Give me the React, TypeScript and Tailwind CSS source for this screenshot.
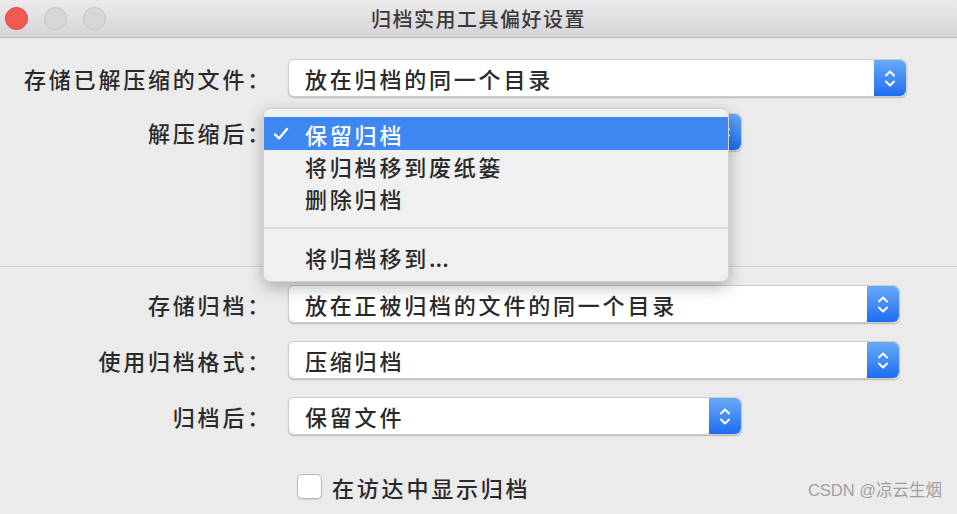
import React from "react";

const FONT = { fontFamily: '"Noto Sans CJK SC", "Noto Sans", sans-serif' };

function Stepper() {
  return (
    <div className="w-[32px] self-stretch rounded-r-[6px] bg-gradient-to-b from-[#68a9f8] to-[#1b6cf0] flex flex-col items-center justify-center gap-[3px]">
      <svg width="12" height="8" viewBox="0 0 12 8" fill="none">
        <path d="M2 6.5 L6 2.5 L10 6.5" stroke="white" strokeWidth="2" strokeLinecap="round" strokeLinejoin="round" />
      </svg>
      <svg width="12" height="8" viewBox="0 0 12 8" fill="none">
        <path d="M2 1.5 L6 5.5 L10 1.5" stroke="white" strokeWidth="2" strokeLinecap="round" strokeLinejoin="round" />
      </svg>
    </div>
  );
}

function Select({ text, width }: { text?: string; width: string }) {
  return (
    <div
      className={`${width} h-[38px] flex items-stretch rounded-[6px] bg-white border border-[#cdcdcd] shadow-[0_1px_1.5px_rgba(0,0,0,0.22)]`}
    >
      <div className="flex-1 flex items-center pl-[16px] text-[22px] tracking-[2.8px] font-medium text-[#2a2a2a] leading-none">
        {text}
      </div>
      <Stepper />
    </div>
  );
}

function Row({ label, children, className }: { label: string; children: React.ReactNode; className?: string }) {
  return (
    <div className={`flex items-center ${className ?? ""}`}>
      <div className="w-[272px] text-right text-[22px] tracking-[2.8px] font-medium text-[#2a2a2a] leading-none">{label}</div>
      <div className="ml-[16px]">{children}</div>
    </div>
  );
}

export default function App() {
  return (
    <div className="relative w-[957px] h-[514px] overflow-hidden bg-[#ebebeb]" style={FONT}>
      {/* Title bar */}
      <div className="h-[38px] grid grid-cols-[1fr_auto_1fr] items-center bg-gradient-to-b from-[#eceaec] to-[#d6d4d6] border-b border-[#b9b9b9]">
        <div className="flex items-center gap-[16px] pl-[5px]">
          <div className="w-[23px] h-[23px] rounded-full bg-[#ef5a51] border border-[#d9463e]" />
          <div className="w-[23px] h-[23px] rounded-full bg-[#d8d7d8] border border-[#c6c5c6]" />
          <div className="w-[23px] h-[23px] rounded-full bg-[#d8d7d8] border border-[#c6c5c6]" />
        </div>
        <div className="text-[20px] tracking-[1.5px] font-medium text-[#3a3a3a] leading-none">归档实用工具偏好设置</div>
        <div />
      </div>

      {/* Top section */}
      <div className="pt-[21px]">
        <Row label="存储已解压缩的文件：">
          <Select text="放在归档的同一个目录" width="w-[619px]" />
        </Row>
        <Row label="解压缩后：" className="mt-[16px]">
          <Select width="w-[454px]" />
        </Row>
      </div>

      {/* Separator */}
      <div className="mt-[115px] h-px bg-[#d2d2d2]" />

      {/* Bottom section */}
      <div className="pt-[18px]">
        <Row label="存储归档：">
          <Select text="放在正被归档的文件的同一个目录" width="w-[612px]" />
        </Row>
        <Row label="使用归档格式：" className="mt-[18px]">
          <Select text="压缩归档" width="w-[612px]" />
        </Row>
        <Row label="归档后：" className="mt-[18px]">
          <Select text="保留文件" width="w-[454px]" />
        </Row>
        <div className="mt-[39px] ml-[297px] flex items-center">
          <div className="w-[25px] h-[25px] rounded-[5px] bg-white border border-[#b9b9b9] shadow-[0_1px_1px_rgba(0,0,0,0.1)]" />
          <div className="ml-[10px] text-[22px] tracking-[2.8px] font-medium text-[#2a2a2a] leading-none">在访达中显示归档</div>
        </div>
      </div>

      {/* Popup menu */}
      <div className="absolute left-[263px] top-[108px] w-[466px] rounded-[7px] bg-[#f0f0f0] border border-[#d3d3d3] shadow-[0_5px_16px_rgba(0,0,0,0.28)] pt-[8px] pb-[8px] text-[22px] tracking-[2.8px] font-medium leading-none text-[#2a2a2a]">
        <div className="h-[33px] flex items-center bg-[#3d88f2] text-white">
          <svg className="ml-[9px]" width="16" height="14" viewBox="0 0 16 14" fill="none">
            <path d="M2 7.5 L6 11.5 L14 2" stroke="white" strokeWidth="2.4" strokeLinecap="round" strokeLinejoin="round" />
          </svg>
          <span className="ml-[16px]">保留归档</span>
        </div>
        <div className="h-[32px] flex items-center pl-[41px]">将归档移到废纸篓</div>
        <div className="h-[32px] flex items-center pl-[41px]">删除归档</div>
        <div className="mt-[13px] mb-[11px] h-[2px] bg-[#dcdcdc]" />
        <div className="h-[33px] flex items-center pl-[41px]">
          将归档移到<span className="tracking-normal">...</span>
        </div>
      </div>

      {/* Watermark */}
      <div
        className="absolute right-[15px] bottom-[16px] text-[16.5px] text-[#a0a0a0] leading-none"
        style={{ fontFamily: '"Liberation Sans", "Noto Sans CJK SC", sans-serif' }}
      >
        CSDN @凉云生烟
      </div>
    </div>
  );
}
